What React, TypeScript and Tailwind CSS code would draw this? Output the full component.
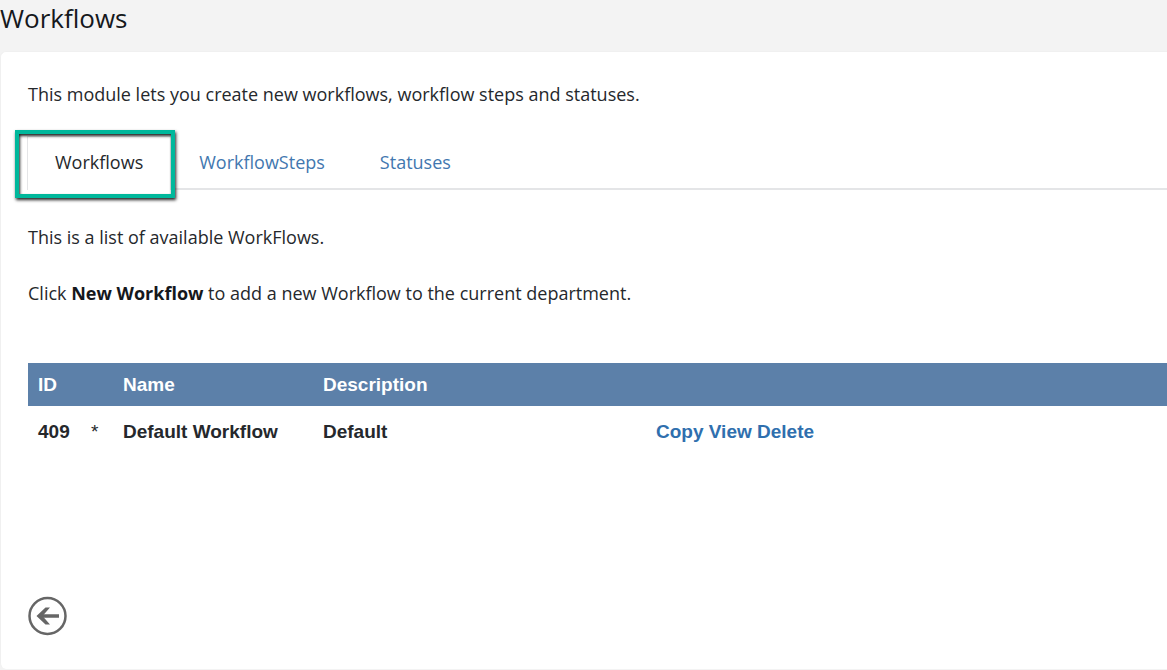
import { useState } from "react";

const tabs = ["Workflows", "WorkflowSteps", "Statuses"];

const workflows = [
  { id: 409, current: true, name: "Default Workflow", description: "Default" },
];

export default function App() {
  const [active, setActive] = useState("Workflows");

  return (
    <div className="flex min-h-screen flex-col overflow-x-hidden bg-[#f3f3f3] pb-px font-['Open_Sans','Noto_Sans',sans-serif] text-lg text-[#25282c]">
      <header className="h-[51px]">
        <h1 className="text-[26px] leading-9 font-normal text-[#15181c]">Workflows</h1>
      </header>

      <main className="flex grow flex-col rounded-l-md border-t border-l border-[#f0f0f0] bg-white pl-[27px]">
        <p className="mt-7 leading-7">This module lets you create new workflows, workflow steps and statuses.</p>

        <div role="tablist" className="mt-7 -ml-px flex gap-px border-b-2 border-[#e4e5e7]">
          {tabs.map((tab) => (
            <div key={tab} className="relative">
              <button
                type="button"
                role="tab"
                aria-selected={active === tab}
                onClick={() => setActive(tab)}
                className={
                  active === tab
                    ? "-mb-0.5 h-[54px] border-x border-t border-[#e4e5e7] bg-white px-[27px] pb-1"
                    : "h-[52px] px-[27px] text-[#4277af]"
                }
              >
                {tab}
              </button>
              {/* Callout frame around the selected tab */}
              {active === tab && (
                <div className="pointer-events-none absolute -top-1.5 -right-1 -bottom-2.5 -left-3 border-4 border-[#00b89c] shadow-[1px_2px_3px_#222,inset_1px_2px_3px_#222]" />
              )}
            </div>
          ))}
        </div>

        <p className="mt-[33px] leading-7">This is a list of available WorkFlows.</p>
        <p className="mt-7 leading-7">
          Click <strong className="font-bold text-[#15181c]">New Workflow</strong> to add a new Workflow to the current
          department.
        </p>

        <table className="mt-14 w-full table-fixed text-left font-['Liberation_Sans',Arial,sans-serif] text-[19px] leading-7 font-bold">
          <colgroup>
            <col className="w-[53px]" />
            <col className="w-8" />
            <col className="w-[200px]" />
            <col className="w-[333px]" />
            <col />
          </colgroup>
          <thead className="bg-[#5c80a9] text-white">
            <tr className="h-[43px]">
              <th className="pl-2.5">ID</th>
              <th aria-label="Current" />
              <th className="pl-2.5">Name</th>
              <th className="pl-2.5">Description</th>
              <th aria-label="Actions" />
            </tr>
          </thead>
          <tbody>
            {workflows.map((w) => (
              <tr key={w.id} className="h-[52px]">
                <td className="pl-2.5">{w.id}</td>
                <td className="pl-2.5 font-normal">{w.current ? "*" : ""}</td>
                <td className="pl-2.5">{w.name}</td>
                <td className="pl-2.5">{w.description}</td>
                <td className="pl-2.5 text-[#2f6fae]">
                  <a href="#copy">Copy</a> <a href="#view">View</a> <a href="#delete">Delete</a>
                </td>
              </tr>
            ))}
          </tbody>
        </table>

        <button type="button" aria-label="Back" className="mt-auto mb-[33px] h-10 w-10">
          <svg viewBox="0 0 40 40" fill="none" stroke="#666" className="h-10 w-10">
            <circle cx="19.5" cy="20" r="18" strokeWidth="2.5" />
            <path d="M31 20H12" strokeWidth="3.5" />
            <path d="M22 11.5H17.500L8.500 20l9 8.500H22L14.500 20z" fill="#666" stroke="none" />
          </svg>
        </button>
      </main>
    </div>
  );
}
